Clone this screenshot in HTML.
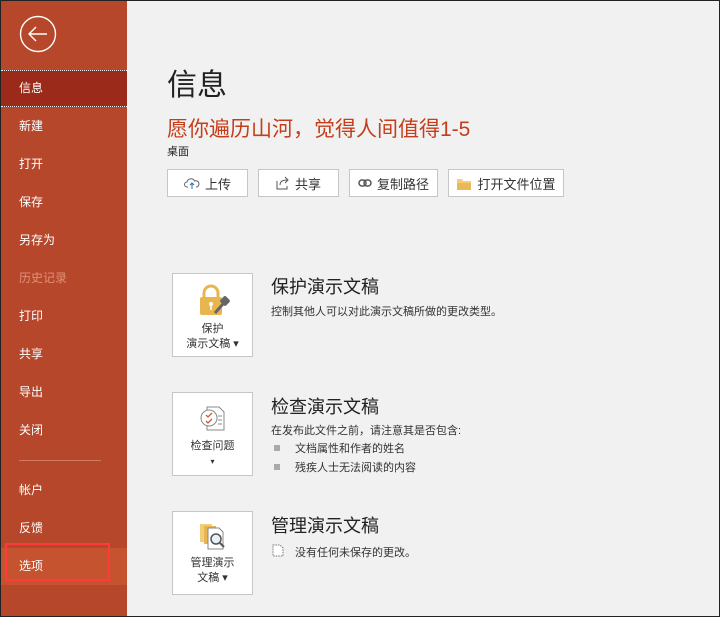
<!DOCTYPE html>
<html><head><meta charset="utf-8"><style>
*{margin:0;padding:0;box-sizing:border-box}
body{width:720px;height:617px;overflow:hidden;background:#f1f1f1;font-family:"Liberation Sans","Noto Sans CJK SC",sans-serif;position:relative}
.frame{position:absolute;left:0;top:0;width:720px;height:617px;border:1px solid #222;pointer-events:none;z-index:9}
.side{position:absolute;left:0;top:0;width:127px;height:617px;background:#b7472a}
.item{position:absolute;left:19px;color:#fff;font-size:12px;line-height:16px}
.sel{position:absolute;left:1px;top:70px;width:126px;height:37px;background:#9b2a1a;border-top:1px dotted #eee;border-bottom:1px dotted #eee}
.hov{position:absolute;left:1px;top:548px;width:126px;height:37px;background:#c5532f}
.red{position:absolute;left:5px;top:543px;width:105px;height:38px;border:2px solid #ff3a3a}
.sep{position:absolute;left:19px;top:460px;width:82px;height:1px;background:#d07a62}
.t{position:absolute;color:#222}
.btn{position:absolute;top:169px;height:28px;background:#fff;border:1px solid #c6c6c6;font-size:13px;color:#333;display:flex;align-items:center;justify-content:center;gap:5px}
.card{position:absolute;left:172px;width:81px;height:84px;background:#fff;border:1px solid #c6c6c6;text-align:center;font-size:11px;color:#333;line-height:15px}
.h{position:absolute;left:271px;font-size:18px;color:#222}
.d{position:absolute;font-size:11px;color:#333}
.sq{position:absolute;left:274px;width:6px;height:6px;background:#aaa}
</style></head><body>
<div class="side">
<svg style="position:absolute;left:19px;top:15px" width="38" height="38" viewBox="0 0 38 38"><circle cx="19" cy="19" r="17.5" fill="none" stroke="#fff" stroke-width="1.4"/><path d="M10 19h18M17 12l-7 7 7 7" fill="none" stroke="#fff" stroke-width="1.4"/></svg>
<div class="sel"></div>
<div class="hov"></div>
<div class="item" style="top:80px">信息</div>
<div class="item" style="top:118px">新建</div>
<div class="item" style="top:156px">打开</div>
<div class="item" style="top:194px">保存</div>
<div class="item" style="top:232px">另存为</div>
<div class="item" style="top:270px;color:#e0907a">历史记录</div>
<div class="item" style="top:308px">打印</div>
<div class="item" style="top:346px">共享</div>
<div class="item" style="top:384px">导出</div>
<div class="item" style="top:422px">关闭</div>
<div class="sep"></div>
<div class="item" style="top:482px">帐户</div>
<div class="item" style="top:520px">反馈</div>
<div class="item" style="top:558px">选项</div>
<div class="red"></div>
</div>
<div class="t" style="left:167px;top:60px;font-size:30px">信息</div>
<div class="t" style="left:167px;top:113px;font-size:21px;color:#c43e1c">愿你遍历山河，觉得人间值得1-5</div>
<div class="t" style="left:167px;top:143px;font-size:11px">桌面</div>
<div class="btn" style="left:167px;width:81px"><svg width="16" height="12" viewBox="0 0 16 12"><path d="M4 10H3a2.5 2.5 0 0 1 0-5 4 4 0 0 1 7.5-1A3 3 0 0 1 13 10h-1" fill="none" stroke="#666"/><path d="M8 12V6M6 8l2-2 2 2" fill="none" stroke="#2b6cb0"/></svg>上传</div>
<div class="btn" style="left:258px;width:81px"><svg width="14" height="14" viewBox="0 0 14 14"><path d="M1 5v8h10v-3M4 9c0-4 3-5 7-5M9 1l3 3-3 3" fill="none" stroke="#555"/></svg>共享</div>
<div class="btn" style="left:349px;width:89px"><svg width="14" height="8" viewBox="0 0 14 8"><rect x="1" y="1" width="7" height="6" rx="3" fill="none" stroke="#555" stroke-width="1.5"/><rect x="6" y="1" width="7" height="6" rx="3" fill="none" stroke="#555" stroke-width="1.5"/></svg>复制路径</div>
<div class="btn" style="left:448px;width:116px"><svg width="16" height="13" viewBox="0 0 16 13"><path d="M1 2h5l1 2h8v9H1z" fill="#f2cd7b"/><path d="M1 6h14v7H1z" fill="#e9b857"/></svg>打开文件位置</div>

<div class="card" style="top:273px"><svg style="margin-top:9px" width="34" height="34" viewBox="0 0 34 34"><path d="M8 14v-4a7 7 0 0 1 14 0v4" fill="none" stroke="#e8b54f" stroke-width="3"/><rect x="4" y="14" width="22" height="18" rx="2" fill="#e8b54f"/><circle cx="15" cy="21" r="2" fill="#fff"/><path d="M15 22v5" stroke="#fff" stroke-width="1.5"/><path d="M19 30l8-9" stroke="#666" stroke-width="3"/><rect x="25" y="14" width="8" height="8" rx="2" transform="rotate(45 29 18)" fill="#666"/></svg><div>保护</div><div>演示文稿 ▾</div></div>
<div class="h" style="top:273px">保护演示文稿</div>
<div class="d" style="left:271px;top:303px">控制其他人可以对此演示文稿所做的更改类型。</div>

<div class="card" style="top:392px"><svg style="margin-top:11px" width="28" height="28" viewBox="0 0 28 28"><path d="M8 3h12l5 5v18H8z" fill="#fff" stroke="#888"/><circle cx="10" cy="14" r="8" fill="#fff" stroke="#888"/><path d="M7 11l2 2 4-4M7 17l2 2 4-4" fill="none" stroke="#d2563a" stroke-width="1.3"/><path d="M19 12h4M19 16h4M19 20h4" stroke="#888"/></svg><div style="margin-top:2px">检查问题</div><div style="font-size:8px">▾</div></div>
<div class="h" style="top:393px">检查演示文稿</div>
<div class="d" style="left:271px;top:422px">在发布此文件之前，请注意其是否包含:</div>
<div class="sq" style="top:445px"></div><div class="d" style="left:295px;top:440px">文档属性和作者的姓名</div>
<div class="sq" style="top:464px"></div><div class="d" style="left:295px;top:459px">残疾人士无法阅读的内容</div>

<div class="card" style="top:511px"><svg style="margin-top:9px" width="32" height="30" viewBox="0 0 32 30"><rect x="3" y="3" width="12" height="18" fill="#f2cd7b"/><rect x="7" y="5" width="12" height="18" fill="#e8b54f"/><path d="M11 7h11l4 4v17H11z" fill="#fff" stroke="#888"/><circle cx="19" cy="18" r="5" fill="#e8f0f8" stroke="#555" stroke-width="1.5"/><path d="M23 22l4 4" stroke="#555" stroke-width="2"/></svg><div>管理演示</div><div>文稿 ▾</div></div>
<div class="h" style="top:512px">管理演示文稿</div>
<svg style="position:absolute;left:272px;top:544px" width="12" height="13" viewBox="0 0 12 13"><path d="M1 1h7l3 3v8H1z" fill="#fff" stroke="#777" stroke-dasharray="1.5 1"/></svg>
<div class="d" style="left:295px;top:544px">没有任何未保存的更改。</div>
<div class="frame"></div>
</body></html>
